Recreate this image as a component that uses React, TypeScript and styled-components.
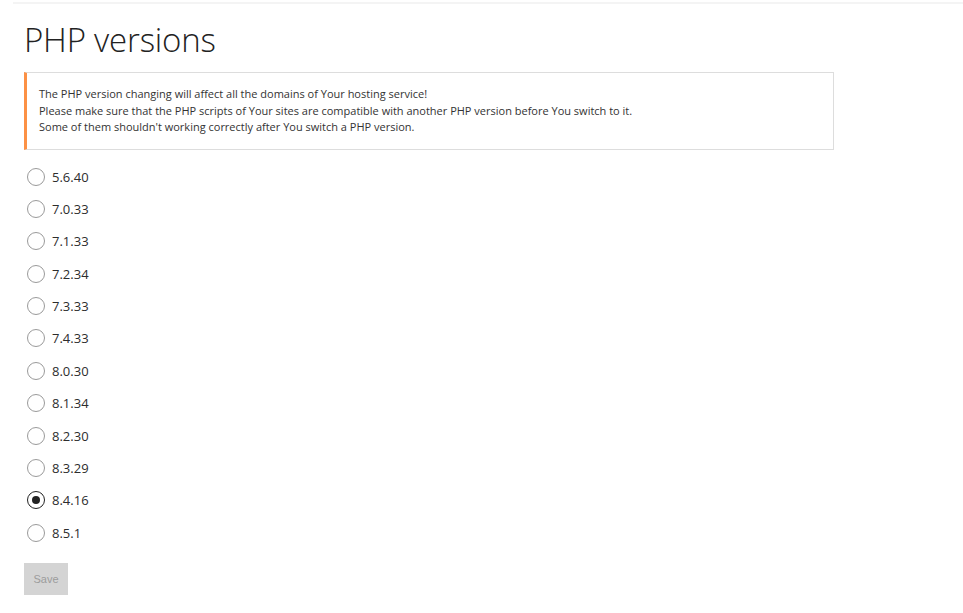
import React, { useState } from "react";
import styled, { createGlobalStyle } from "styled-components";

const Global = createGlobalStyle`
  html, body { margin: 0; padding: 0; background: #fff; }
  body { font-family: "Open Sans", "Noto Sans", sans-serif; color: #333; }
`;

const Page = styled.div`
  width: 963px;
  min-height: 613px;
  box-sizing: border-box;
  padding-top: 2px;
`;

const TopRule = styled.div`
  margin-left: 13px;
  height: 2px;
  background: #f4f4f4;
`;

const Content = styled.div`
  padding: 0 24px;
`;

const Title = styled.h1`
  margin: 16px 0 12px;
  font-size: 33px;
  line-height: 40px;
  font-weight: 300;
  color: #222;
  letter-spacing: -0.2px;
`;

const Notice = styled.div`
  width: 810px;
  box-sizing: border-box;
  border: 1px solid #ddd;
  border-left: 3px solid #fc9145;
  padding: 13px 12px 13px 12px;
  font-size: 11px;
  line-height: 16.5px;
  color: #333;
`;

const List = styled.div`
  margin-top: 11px;
  display: flex;
  flex-direction: column;
`;

const Row = styled.label`
  display: flex;
  align-items: center;
  height: 32.36px;
  gap: 7px;
  cursor: pointer;
  padding-left: 3px;
`;

const Circle = styled.span<{ $checked: boolean }>`
  box-sizing: border-box;
  width: 18px;
  height: 18px;
  border-radius: 50%;
  border: ${(p) => (p.$checked ? "1.5px solid #222" : "1px solid #9a9a9a")};
  display: flex;
  align-items: center;
  justify-content: center;
  &::after {
    content: "";
    display: ${(p) => (p.$checked ? "block" : "none")};
    width: 8px;
    height: 8px;
    border-radius: 50%;
    background: #222;
  }
`;

const Label = styled.span`
  font-size: 13px;
  color: #2d2d2d;
`;

const SaveButton = styled.button`
  margin-top: 14px;
  width: 44px;
  height: 32px;
  border: none;
  background: #d4d4d4;
  color: #9c9c9c;
  font-family: "Liberation Sans", Arial, sans-serif;
  font-size: 11px;
  padding: 0;
`;

const versions = [
  "5.6.40", "7.0.33", "7.1.33", "7.2.34", "7.3.33", "7.4.33",
  "8.0.30", "8.1.34", "8.2.30", "8.3.29", "8.4.16", "8.5.1",
];

export default function App() {
  const [selected, setSelected] = useState("8.4.16");
  return (
    <Page>
      <Global />
      <TopRule />
      <Content>
        <Title>PHP versions</Title>
        <Notice>
          The PHP version changing will affect all the domains of Your hosting service!
          <br />
          Please make sure that the PHP scripts of Your sites are compatible with another PHP version before You switch to it.
          <br />
          Some of them shouldn't working correctly after You switch a PHP version.
        </Notice>
        <List>
          {versions.map((v) => (
            <Row key={v} onClick={() => setSelected(v)}>
              <Circle $checked={selected === v} />
              <Label>{v}</Label>
            </Row>
          ))}
        </List>
        <SaveButton disabled>Save</SaveButton>
      </Content>
    </Page>
  );
}
